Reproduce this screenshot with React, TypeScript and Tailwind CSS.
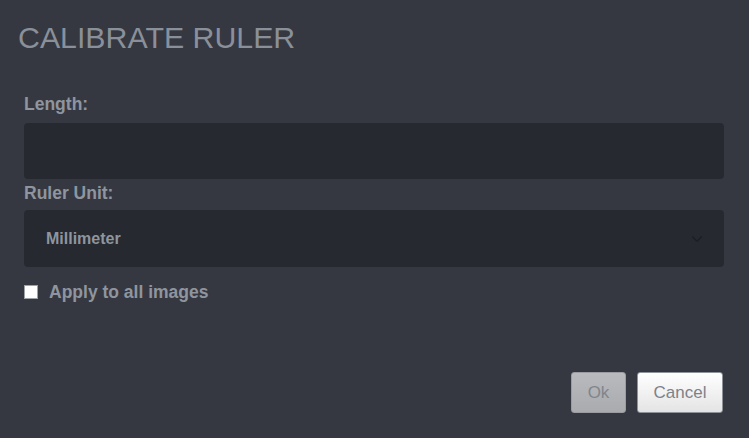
import { ChevronDown } from 'lucide-react';

export default function App() {
  return (
    <div className="w-[749px] h-[438px] bg-[#353841] font-['Liberation_Sans',Arial,sans-serif] flex flex-col">
      <h1 className="pl-[18px] pt-[21px] text-[30.3px] leading-[34px] text-[#8a9099] font-normal">
        CALIBRATE RULER
      </h1>

      <div className="px-[24px] pt-[39px] flex flex-col">
        <label className="text-[17.5px] leading-[20px] font-bold text-[#8f959e]">Length:</label>
        <div className="mt-[9px] h-[56px] w-[700px] rounded-[4px] bg-[#262930]" />

        <label className="mt-[4px] text-[17.5px] leading-[20px] font-bold text-[#8f959e]">Ruler Unit:</label>
        <div className="mt-[7px] h-[57px] w-[700px] rounded-[4px] bg-[#262930] flex items-center justify-between pl-[22px] pr-[18px]">
          <span className="text-[16px] font-bold text-[#8f959e]">Millimeter</span>
          <ChevronDown className="w-[18px] h-[18px] text-[#1c1e24]" strokeWidth={1.5} />
        </div>

        <div className="mt-[15px] flex items-center gap-[11px]">
          <span className="w-[14px] h-[14px] bg-white border border-[#9da1a8] shrink-0" />
          <span className="text-[17.5px] leading-[20px] font-bold text-[#8f959e]">Apply to all images</span>
        </div>
      </div>

      <div className="mt-auto mb-[25px] pr-[26px] flex justify-end gap-[11px]">
        <button className="w-[55px] h-[41px] rounded-[3px] border border-[#9a9ca1] bg-gradient-to-b from-[#b9babd] to-[#a9abaf] text-[17px] text-[#80858c]">
          Ok
        </button>
        <button className="w-[86px] h-[41px] rounded-[3px] border border-[#8e939a] bg-gradient-to-b from-white to-[#e4e4e4] text-[17px] text-[#7d828a]">
          Cancel
        </button>
      </div>
    </div>
  );
}
